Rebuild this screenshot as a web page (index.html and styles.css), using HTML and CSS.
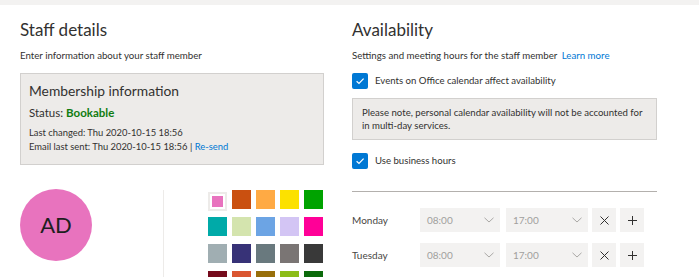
FILE: index.html
```html
<!DOCTYPE html>
<html lang="en">
<head>
<meta charset="utf-8">
<title>Staff details</title>
<link rel="stylesheet" href="styles.css">
</head>
<body>
<div class="topbar"></div>
<div class="page">
  <section class="col col-left">
    <h1 class="title">Staff details</h1>
    <p class="sub">Enter information about your staff member</p>
    <div class="member-box">
      <h2 class="member-title">Membership information</h2>
      <div class="status">Status: <b class="bookable">Bookable</b></div>
      <div class="meta">Last changed: Thu 2020-10-15 18:56</div>
      <div class="meta meta-2">Email last sent: Thu 2020-10-15 18:56 | <a class="link">Re-send</a></div>
    </div>
    <div class="persona">
      <div class="avatar-wrap"><div class="avatar">AD</div></div>
      <div class="vdivider"></div>
      <div class="swatches">
        <div class="swatch selected"><span class="swatch-inner"></span></div>
        <div class="swatch c-ca5010"></div>
        <div class="swatch c-ffaa44"></div>
        <div class="swatch c-fce100"></div>
        <div class="swatch c-00a300"></div>
        <div class="swatch c-00a8a8"></div>
        <div class="swatch c-d4e4ae"></div>
        <div class="swatch c-6aa3e2"></div>
        <div class="swatch c-d3c5f4"></div>
        <div class="swatch c-ff0097"></div>
        <div class="swatch c-a0aeb2"></div>
        <div class="swatch c-373277"></div>
        <div class="swatch c-69797e"></div>
        <div class="swatch c-7a7574"></div>
        <div class="swatch c-393939"></div>
        <div class="swatch c-750b1c"></div>
        <div class="swatch c-da5631"></div>
        <div class="swatch c-986f0b"></div>
        <div class="swatch c-8cbd18"></div>
        <div class="swatch c-0b6a0b"></div>
      </div>
    </div>
  </section>
  <section class="col col-right">
    <h1 class="title">Availability</h1>
    <p class="sub">Settings and meeting hours for the staff member <a class="link learn">Learn more</a></p>
    <label class="check-row">
      <span class="checkbox"><svg width="10" height="10" viewBox="0 0 10 10"><path d="M1.6 5.2 L4 7.4 L8.6 2.6" fill="none" stroke="#fff" stroke-width="1.2"/></svg></span>
      <span class="check-label">Events on Office calendar affect availability</span>
    </label>
    <div class="note">Please note, personal calendar availability will not be accounted for in multi-day services.</div>
    <label class="check-row check-row-2">
      <span class="checkbox"><svg width="10" height="10" viewBox="0 0 10 10"><path d="M1.6 5.2 L4 7.4 L8.6 2.6" fill="none" stroke="#fff" stroke-width="1.2"/></svg></span>
      <span class="check-label">Use business hours</span>
    </label>
    <div class="hr"></div>
    <div class="day-row">
      <span class="day">Monday</span>
      <div class="dd dd-1"><span>08:00</span><svg class="chev" width="10" height="6" viewBox="0 0 10 6"><path d="M0.5 0.8 L5 5 L9.5 0.8" fill="none" stroke="#a19f9d" stroke-width="0.9"/></svg></div>
      <div class="dd dd-2"><span>17:00</span><svg class="chev" width="10" height="6" viewBox="0 0 10 6"><path d="M0.5 0.8 L5 5 L9.5 0.8" fill="none" stroke="#a19f9d" stroke-width="0.9"/></svg></div>
      <div class="icon-btn"><svg width="9" height="9" viewBox="0 0 9 9"><path d="M0.5 0.5 L8.5 8.5 M8.5 0.5 L0.5 8.5" stroke="#323130" stroke-width="1"/></svg></div>
      <div class="icon-btn"><svg width="9" height="9" viewBox="0 0 9 9"><path d="M4.5 0 V9 M0 4.5 H9" stroke="#323130" stroke-width="1"/></svg></div>
    </div>
    <div class="day-row">
      <span class="day">Tuesday</span>
      <div class="dd dd-1"><span>08:00</span><svg class="chev" width="10" height="6" viewBox="0 0 10 6"><path d="M0.5 0.8 L5 5 L9.5 0.8" fill="none" stroke="#a19f9d" stroke-width="0.9"/></svg></div>
      <div class="dd dd-2"><span>17:00</span><svg class="chev" width="10" height="6" viewBox="0 0 10 6"><path d="M0.5 0.8 L5 5 L9.5 0.8" fill="none" stroke="#a19f9d" stroke-width="0.9"/></svg></div>
      <div class="icon-btn"><svg width="9" height="9" viewBox="0 0 9 9"><path d="M0.5 0.5 L8.5 8.5 M8.5 0.5 L0.5 8.5" stroke="#323130" stroke-width="1"/></svg></div>
      <div class="icon-btn"><svg width="9" height="9" viewBox="0 0 9 9"><path d="M4.5 0 V9 M0 4.5 H9" stroke="#323130" stroke-width="1"/></svg></div>
    </div>
  </section>
</div>
</body>
</html>
```
FILE: styles.css
```css
* { box-sizing: border-box; }
html, body { margin: 0; padding: 0; background: #fff; }
body {
  font-family: Lato, "Open Sans", sans-serif;
  color: #323130;
  width: 699px;
  height: 277px;
  overflow: hidden;
}
.topbar { height: 5px; background: #f3f2f1; }
.page {
  display: flex;
  gap: 28px;
  padding: 13px 20px 0 20px;
}
.col-left { width: 304px; flex: none; }
.col-right { width: 305px; flex: none; }
.title {
  margin: 0;
  font-size: 17px;
  line-height: 24px;
  font-weight: 400;
  color: #323130;
}
.sub {
  margin: 6px 0 0 0;
  font-size: 9.7px;
  line-height: 14px;
  color: #323130;
}
.link { color: #0078d4; text-decoration: none; }
.learn { margin-left: 2px; }
.member-box {
  margin-top: 11px;
  border: 1px solid #d2d0ce;
  background: #edebe9;
  padding: 8px 8px 9px 8px;
}
.member-title {
  margin: 0;
  font-size: 13.8px;
  line-height: 18px;
  font-weight: 400;
}
.status { margin-top: 5px; font-size: 11.5px; line-height: 16px; }
.bookable { color: #107c10; font-weight: 700; }
.meta { font-size: 9.4px; line-height: 14.4px; margin-top: 5px; }
.meta-2 { margin-top: 0; }
.persona {
  display: flex;
  margin-top: 24px;
  height: 100px;
}
.avatar-wrap { width: 143px; flex: none; }
.avatar {
  width: 72px;
  height: 72px;
  border-radius: 50%;
  background: #e873be;
  color: #201f1e;
  font-size: 22px;
  display: flex;
  align-items: center;
  justify-content: center;
}
.vdivider { width: 1px; background: #edebe9; margin-top: 1px; }
.swatches {
  margin-left: 44px;
  margin-top: 1px;
  display: grid;
  grid-template-columns: repeat(5, 19px);
  grid-auto-rows: 19px;
  column-gap: 5px;
  row-gap: 8px;
}
.swatch { width: 19px; height: 19px; }
.swatch.selected {
  background: #edebe9;
  padding: 2px;
  margin-top: 2px;
}
.swatch-inner {
  display: block;
  width: 100%;
  height: 100%;
  background: #fff;
  border: 2px solid #fff;
  box-shadow: inset 0 0 0 6px #e873be;
}
.c-ca5010 { background: #ca5010; }
.c-ffaa44 { background: #ffaa44; }
.c-fce100 { background: #fce100; }
.c-00a300 { background: #00a300; }
.c-00a8a8 { background: #00aaa8; }
.c-d4e4ae { background: #d4e4ae; }
.c-6aa3e2 { background: #6ca4e4; }
.c-d3c5f4 { background: #d3c5f4; }
.c-ff0097 { background: #ff0097; }
.c-a0aeb2 { background: #a0aeb2; }
.c-373277 { background: #373277; }
.c-69797e { background: #69797e; }
.c-7a7574 { background: #7a7574; }
.c-393939 { background: #393939; }
.c-750b1c { background: #750b1c; }
.c-da5631 { background: #da5631; }
.c-986f0b { background: #986f0b; }
.c-8cbd18 { background: #8cbd18; }
.c-0b6a0b { background: #0b6a0b; }

.check-row {
  display: flex;
  align-items: center;
  margin-top: 11px;
  height: 16px;
}
.check-row-2 { margin-top: 13px; }
.checkbox {
  width: 16px;
  height: 16px;
  border-radius: 2px;
  background: #0078d4;
  display: flex;
  align-items: center;
  justify-content: center;
  flex: none;
}
.check-label { margin-left: 7px; font-size: 9.6px; line-height: 14px; }
.note {
  margin-top: 9px;
  border: 1px solid #d2d0ce;
  background: #edebe9;
  padding: 7px 9px;
  font-size: 9.6px;
  line-height: 13px;
}
.hr { margin-top: 22px; height: 1px; background: #b3b0ad; width: 305px; }
.day-row {
  display: flex;
  align-items: center;
  height: 24px;
  margin-top: 16px;
}
.day-row + .day-row { margin-top: 11px; }
.day { width: 68px; font-size: 10px; color: #484644; flex: none; }
.dd {
  height: 24px;
  background: #f3f2f1;
  display: flex;
  align-items: center;
  justify-content: space-between;
  padding: 0 6px 0 7px;
  font-size: 10px;
  color: #a19f9d;
  flex: none;
}
.dd-1 { width: 80px; }
.dd-2 { width: 82px; margin-left: 6px; }
.icon-btn {
  width: 24px;
  height: 24px;
  background: #f3f2f1;
  margin-left: 4px;
  display: flex;
  align-items: center;
  justify-content: center;
  flex: none;
}
```
